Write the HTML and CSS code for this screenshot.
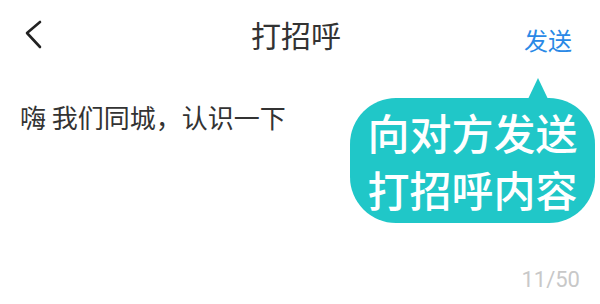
FILE: index.html
```html
<!DOCTYPE html>
<html lang="zh-CN">
<head>
    <meta charset="UTF-8">
    <meta name="viewport" content="width=device-width, initial-scale=1.0">
    <title>打招呼</title>
    <link rel="stylesheet" href="styles.css">
</head>
<body>
    <div class="page">
        <!-- Barra superior -->
        <header class="topbar">
            <button class="back" aria-label="返回">
                <svg width="24" height="32" viewBox="0 0 24 32">
                    <polyline points="18,5 5,16 18,30" fill="none" stroke="#222" stroke-width="2.6" stroke-linecap="round" stroke-linejoin="round"/>
                </svg>
            </button>
            <h1 class="title">打招呼</h1>
            <button class="send">发送</button>
        </header>

        <!-- Texto del saludo -->
        <main class="editor">
            <p class="message">嗨 我们同城，认识一下</p>
            <div class="counter">11/50</div>
        </main>

        <!-- Burbuja de ayuda -->
        <div class="tip">向对方发送<br>打招呼内容</div>
    </div>
</body>
</html>
```

FILE: styles.css
```css
body {
    margin: 0;
    padding: 0;
    background-color: #fff;
    font-family: "Noto Sans CJK SC", "Noto Sans", sans-serif;
    overflow: hidden;
}
.page {
    position: relative;
    width: 600px;
    height: 304px;
}
.topbar {
    display: grid;
    grid-template-columns: 1fr auto 1fr;
    align-items: start;
    height: 72px;
    box-sizing: border-box;
    padding: 14px 28px 0 20px;
}
button {
    background: none;
    border: none;
    padding: 0;
    margin: 0;
    cursor: pointer;
    font-family: inherit;
}
.back {
    justify-self: start;
    margin-top: 3px;
    margin-left: 2px;
    display: block;
}
.back svg {
    display: block;
}
.title {
    margin: 0;
    font-size: 30px;
    line-height: 40px;
    font-weight: normal;
    color: #333;
}
.send {
    justify-self: end;
    margin-top: 10px;
    font-size: 24px;
    line-height: 32px;
    color: #2a89e6;
}
.editor {
    display: flex;
    flex-direction: column;
    height: 232px;
    box-sizing: border-box;
    padding: 28px 20px 11px 20px;
}
.message {
    margin: 0;
    font-size: 26px;
    line-height: 34px;
    color: #333;
}
.counter {
    margin-top: auto;
    text-align: right;
    font-family: Roboto, sans-serif;
    font-size: 22px;
    line-height: 26px;
    color: #c8c8c8;
}
.tip {
    position: absolute;
    left: 350px;
    top: 98px;
    width: 245px;
    height: 125px;
    box-sizing: border-box;
    padding-top: 5px;
    border-radius: 46px;
    background-color: #20c7c8;
    color: #fff;
    font-size: 42px;
    font-weight: 500;
    line-height: 57px;
    text-align: center;
}
.tip::before {
    content: "";
    position: absolute;
    left: 178px;
    top: -20px;
    border-left: 10px solid transparent;
    border-right: 10px solid transparent;
    border-bottom: 21px solid #20c7c8;
}
```
